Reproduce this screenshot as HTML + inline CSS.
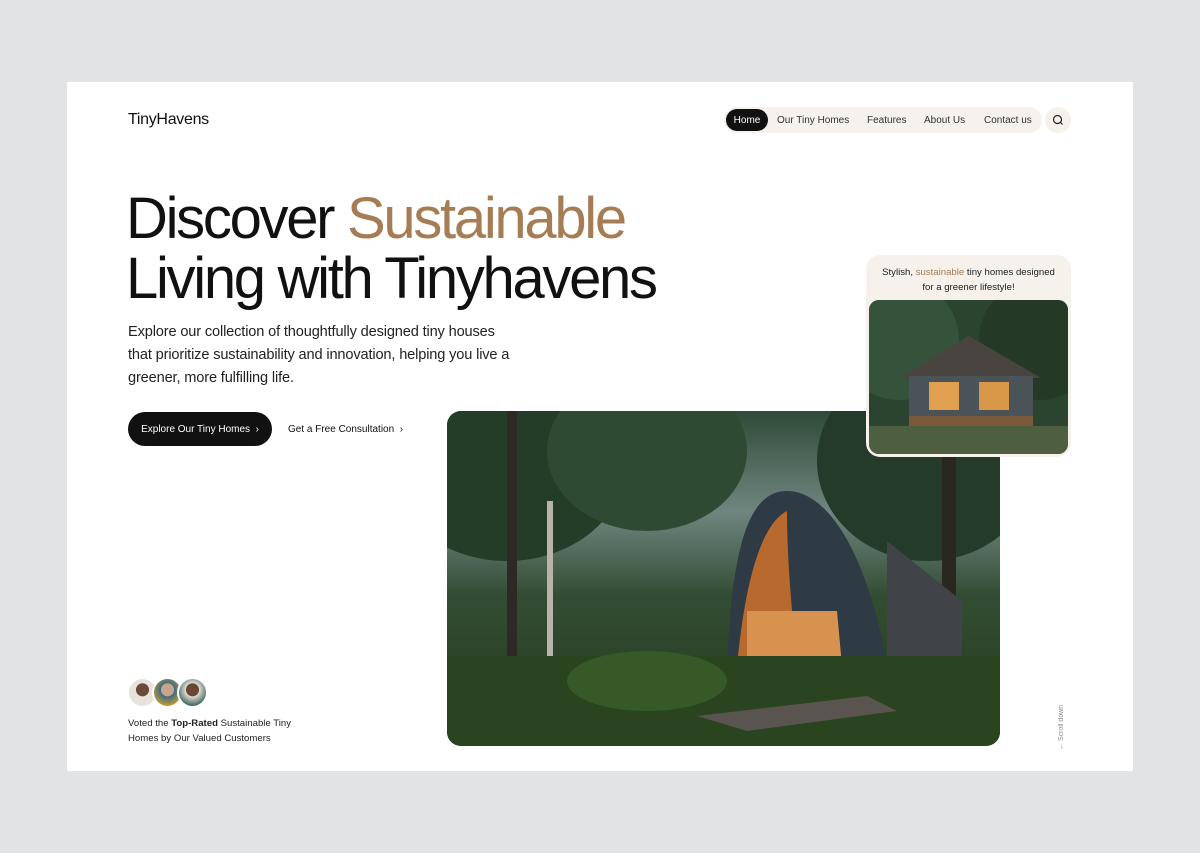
<!DOCTYPE html>
<html><head><style>
*{margin:0;padding:0;box-sizing:border-box}
body{width:1200px;height:853px;background:#e2e3e5;font-family:"Liberation Sans",sans-serif;position:relative;overflow:hidden;color:#111}
.card{position:absolute;left:67px;top:82px;width:1066px;height:689px;background:#fff}
.abs{position:absolute}
.logo{left:128px;top:111px;font-size:16px;font-weight:500;letter-spacing:-0.3px}
.nav{left:724px;top:107px;width:318px;height:26px;background:#f6f1ea;border-radius:13px;font-size:10px;color:#333}
.nav span{position:absolute;top:8px}
.home{left:2px;top:2px;width:42px;height:22px;background:#111;color:#fff;border-radius:11px;font-size:10px;display:flex;align-items:center;justify-content:center}
.srch{left:1045px;top:107px;width:26px;height:26px;border-radius:50%;background:#f6f1ea}
h1{position:absolute;left:126px;top:189px;font-size:58px;font-weight:400;line-height:60px;letter-spacing:-2.3px}
h1 b{font-weight:400;color:#a67c55}
.p{left:128px;top:321px;font-size:14.6px;line-height:23px;color:#222;width:390px;letter-spacing:-0.15px}
.btn{left:128px;top:412px;width:144px;height:34px;background:#111;color:#fff;border-radius:17px;font-size:10px;display:flex;align-items:center;justify-content:center}
.lnk{left:288px;top:424px;font-size:10px}
.vote{left:128px;top:716px;font-size:9.6px;line-height:15px;color:#222}
.av{width:31px;height:31px;border-radius:50%;border:2px solid #fff;top:677px}
</style></head><body>
<div class="card"></div>
<div class="abs logo">TinyHavens</div>
<div class="abs nav">
<div class="abs home">Home</div>
<span style="left:53px">Our Tiny Homes</span>
<span style="left:143px">Features</span>
<span style="left:200px">About Us</span>
<span style="left:260px">Contact us</span>
</div>
<div class="abs srch"><svg width="26" height="26" viewBox="0 0 26 26"><circle cx="12.5" cy="12.5" r="4" fill="none" stroke="#222" stroke-width="1.2"/><path d="M15.5 15.5L17.5 17.5" stroke="#222" stroke-width="1.2"/></svg></div>
<h1>Discover <b>Sustainable</b><br>Living with Tinyhavens</h1>
<div class="abs p">Explore our collection of thoughtfully designed tiny houses that prioritize sustainability and innovation, helping you live a greener, more fulfilling life.</div>
<div class="abs btn">Explore Our Tiny Homes &nbsp;›</div>
<div class="abs lnk">Get a Free Consultation &nbsp;›</div>
<div class="abs av" style="left:127px;background:radial-gradient(circle at 50% 40%,#6b4a3a 30%,#e8e2dc 32%)"></div>
<div class="abs av" style="left:152px;background:radial-gradient(circle at 50% 40%,#c9a48a 30%,#3d6a86 32%,#d0a12a 80%)"></div>
<div class="abs av" style="left:177px;background:radial-gradient(circle at 50% 40%,#6b4630 30%,#ddd 32%,#2f5a45 80%)"></div>
<div class="abs vote">Voted the <b>Top-Rated</b> Sustainable Tiny<br>Homes by Our Valued Customers</div>

<svg class="abs" style="left:447px;top:411px" width="553" height="335">
<defs><clipPath id="c1"><rect width="553" height="335" rx="14"/></clipPath>
<linearGradient id="g1" x1="0" y1="0" x2="0" y2="1"><stop offset="0" stop-color="#2f4a36"/><stop offset=".3" stop-color="#6f8680"/><stop offset=".55" stop-color="#334d34"/><stop offset="1" stop-color="#223a1b"/></linearGradient></defs>
<g clip-path="url(#c1)">
<rect width="553" height="335" fill="url(#g1)"/>
<ellipse cx="60" cy="50" rx="120" ry="100" fill="#233d29"/>
<ellipse cx="200" cy="40" rx="100" ry="80" fill="#2e4a33"/>
<ellipse cx="480" cy="50" rx="110" ry="100" fill="#233b28"/>
<rect x="60" y="0" width="10" height="270" fill="#2d2a25"/>
<rect x="100" y="90" width="6" height="170" fill="#b8b4aa"/>
<rect x="495" y="40" width="14" height="260" fill="#2a2620"/>
<path d="M280 255 C285 140 300 80 340 80 C380 80 420 140 440 255 Z" fill="#2e3a44"/>
<path d="M290 255 C300 150 320 110 340 100 C340 150 345 200 350 255 Z" fill="#b8692e"/>
<path d="M300 255 L300 200 L390 200 L395 255 Z" fill="#d8924f"/>
<path d="M440 250 L440 130 L515 190 L515 250 Z" fill="#404448"/>
<rect x="0" y="245" width="553" height="90" fill="#2a4420"/>
<ellipse cx="200" cy="270" rx="80" ry="30" fill="#355a28"/>
<path d="M250 305 L420 285 L450 300 L300 320 Z" fill="#5a5450"/>
</g></svg>

<div class="abs" style="left:866px;top:255px;width:205px;height:202px;background:#f6f1ea;border-radius:14px"></div>
<div class="abs" style="left:866px;top:265px;width:205px;text-align:center;font-size:9.6px;line-height:15px;color:#222">Stylish, <span style="color:#a67c55">sustainable</span> tiny homes designed<br>for a greener lifestyle!</div>
<svg class="abs" style="left:869px;top:300px" width="199" height="154">
<defs><clipPath id="c2"><rect width="199" height="154" rx="10"/></clipPath></defs>
<g clip-path="url(#c2)">
<rect width="199" height="154" fill="#2a4430"/>
<ellipse cx="30" cy="40" rx="60" ry="60" fill="#35533a"/>
<ellipse cx="170" cy="40" rx="60" ry="60" fill="#243a27"/>
<path d="M30 78 L100 36 L172 78 Z" fill="#4a4440"/>
<rect x="40" y="76" width="124" height="48" fill="#4a5458"/>
<rect x="60" y="82" width="30" height="28" fill="#e0a050"/>
<rect x="110" y="82" width="30" height="28" fill="#d89848"/>
<rect x="40" y="116" width="124" height="10" fill="#7a5a3a"/>
<rect x="0" y="126" width="199" height="28" fill="#4e5e40"/>
</g></svg>

<div class="abs" style="left:1058px;top:700px;width:14px;height:50px;font-size:7px;color:#888;writing-mode:vertical-rl;transform:rotate(180deg)">← Scroll down</div>
</body></html>
